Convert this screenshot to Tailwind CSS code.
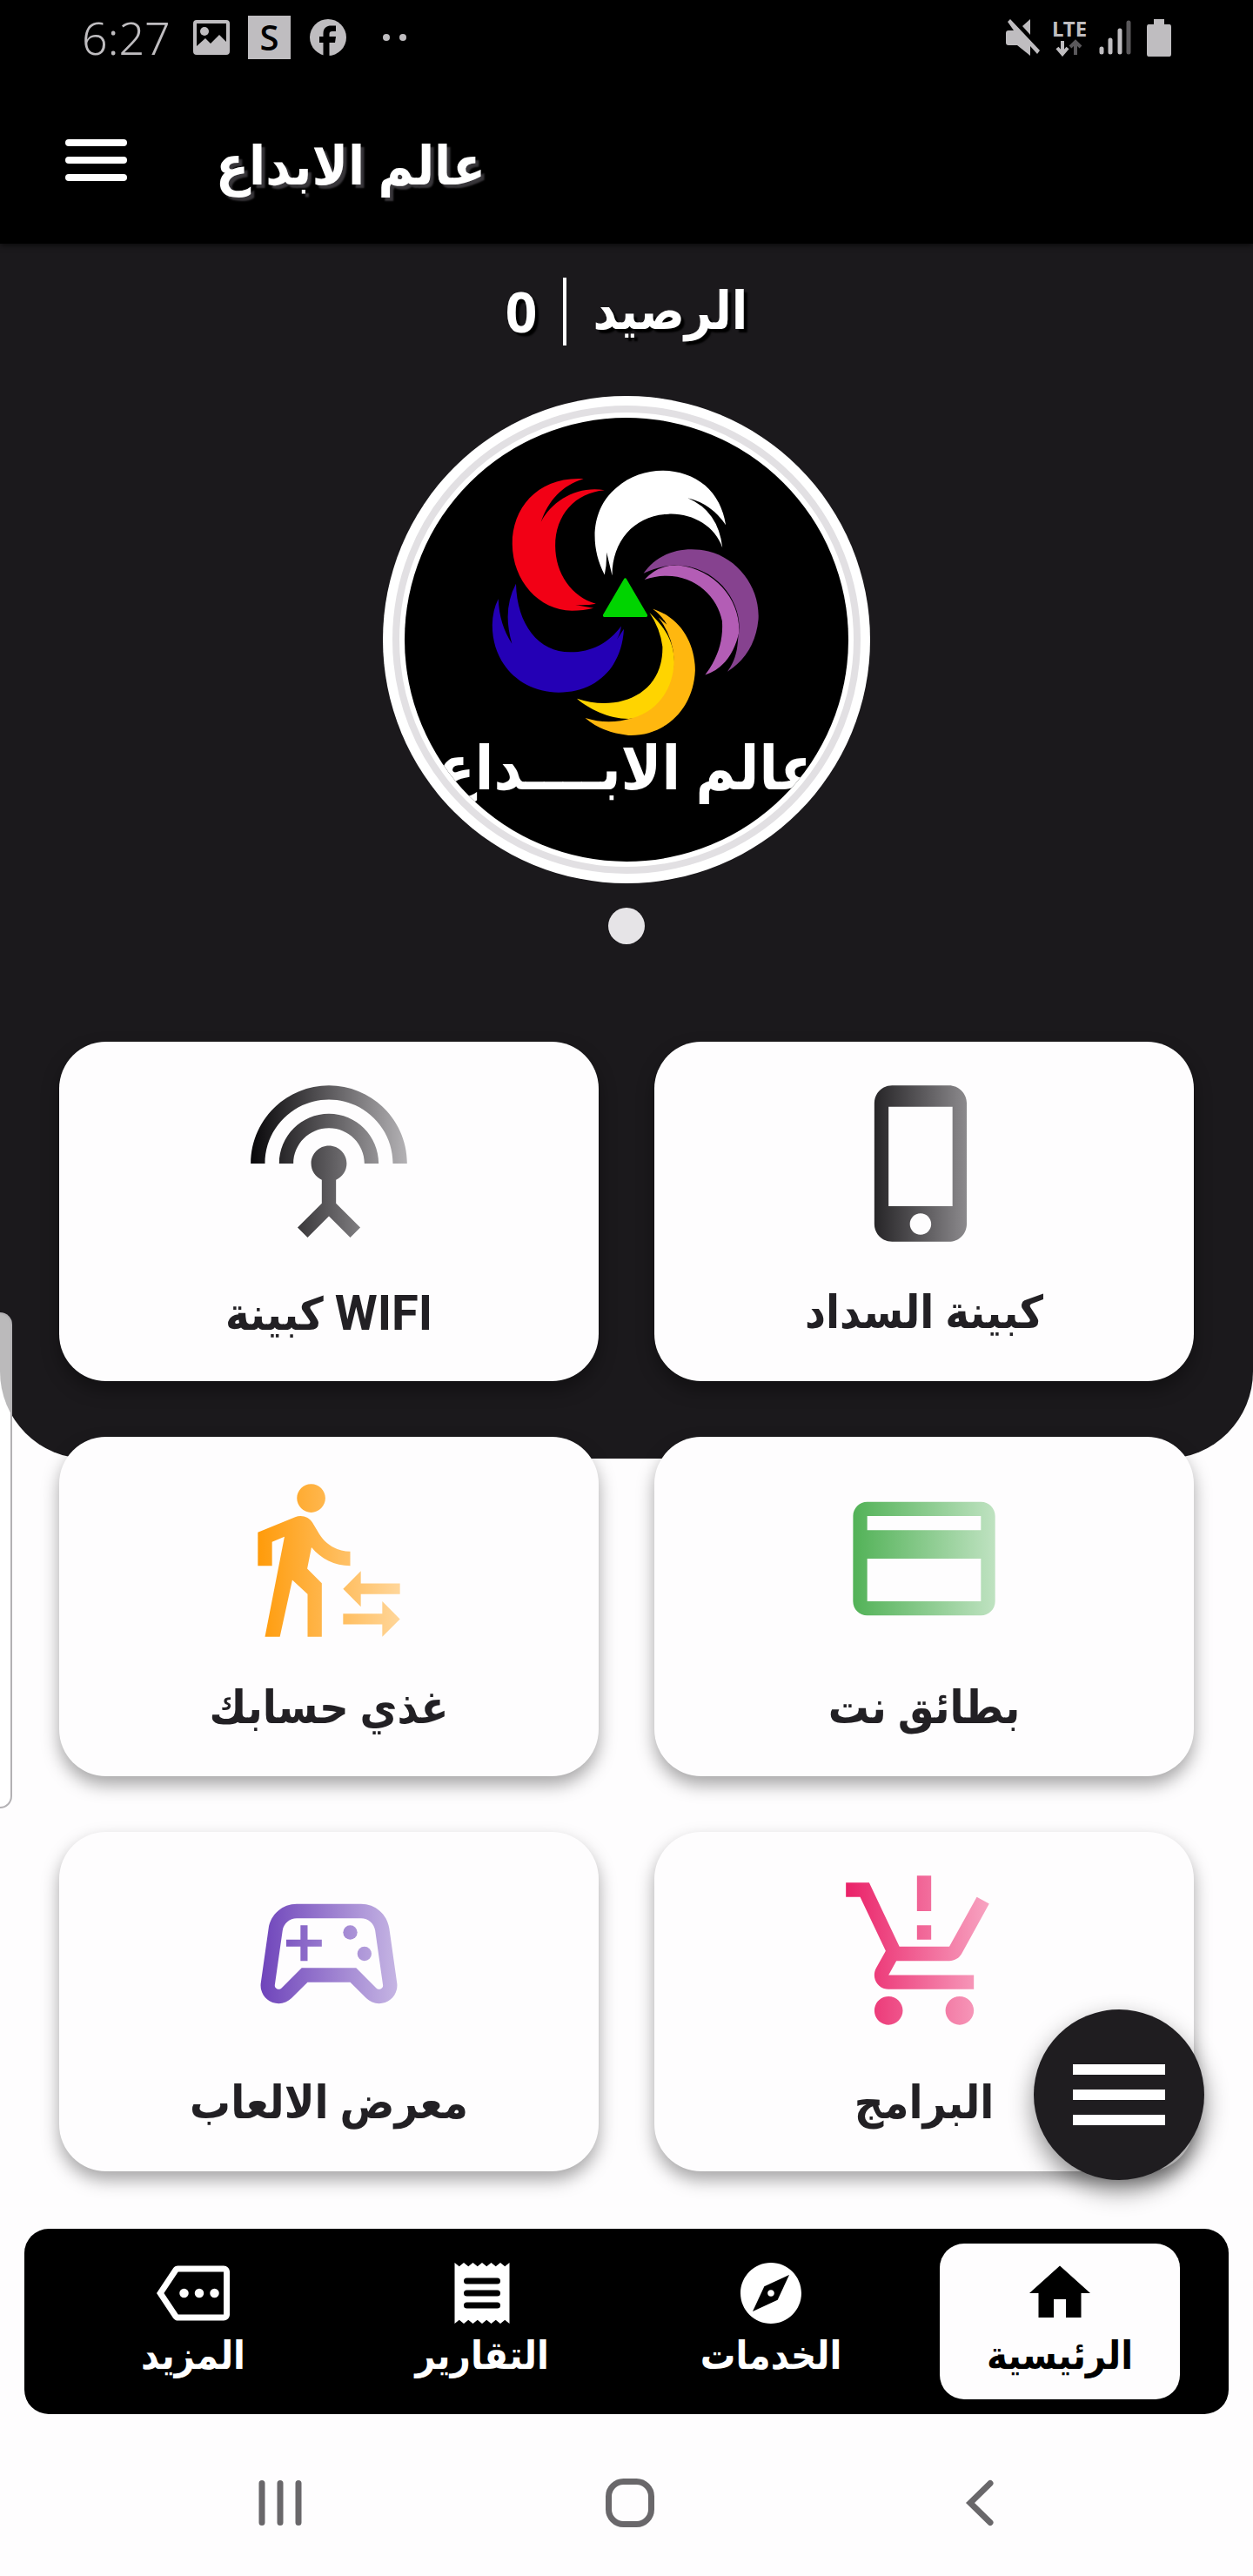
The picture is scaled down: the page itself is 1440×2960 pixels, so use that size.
<!DOCTYPE html>
<html lang="ar">
<head>
<meta charset="utf-8">
<meta name="viewport" content="width=device-width, initial-scale=1">
<title>عالم الابداع</title>
<script src="https://cdn.jsdelivr.net/npm/@tailwindcss/browser@4"></script>
</head>
<body class="bg-[#fefdfe] font-['Roboto','DejaVu_Sans_Condensed','DejaVu_Sans',sans-serif] font-bold text-[#222024]">
<div class="relative flex min-h-screen flex-col overflow-hidden">

  <header class="relative z-10 bg-black text-white shadow-[0_2px_6px_rgba(0,0,0,0.6)]">
    <!-- system status bar -->
    <div class="flex h-[88px] items-start justify-between pt-[14px] pr-[94px] pl-[94px] text-[#bfbdc0]">
      <div class="flex h-[58px] items-center">
        <span class="w-[128px] font-['Noto_Sans'] text-[52px] leading-[58px] font-light">6:27</span>
        <svg class="h-[40px] w-[42px]" viewBox="0 0 42 40" fill="currentColor"><path fill-rule="evenodd" d="M4 0H38Q42 0 42 4V36Q42 40 38 40H4Q0 40 0 36V4Q0 0 4 0ZM4 4V30L14 21L20 27L30 17L38 25V4Z"/><circle cx="13" cy="13" r="5"/></svg>
        <span class="ml-[21px] flex h-[50px] w-[49px] items-center justify-center bg-[#bfbdc0] font-['Open_Sans'] text-[40px] leading-none font-semibold text-black">S</span>
        <svg class="ml-[22px] h-[42px] w-[42px]" viewBox="0 0 42 42"><circle cx="21" cy="21" r="21" fill="currentColor"/><path d="M15.500 42V27H11V20H15.500V17C15.500 10 19 7.500 25 7.500H30V14H26C23.500 14 22.500 15 22.500 17V20H30L29 27H22.500V42Z" fill="#000"/></svg>
        <svg class="ml-[42px] h-[10px] w-[28px]" viewBox="0 0 28 10" fill="currentColor"><circle cx="4" cy="5" r="4"/><circle cx="23" cy="5" r="4"/></svg>
      </div>
      <div class="flex h-[58px] items-center">
        <svg class="h-[42px] w-[40px]" viewBox="0 0 40 42" fill="currentColor"><path d="M3 13H9L2 3L5 0L39 36L36 40L28 31V42L13 30H3Q0 30 0 27V16Q0 13 3 13ZM28 0V18L19 8Z"/></svg>
        <div class="ml-[11px] flex w-[44px] flex-col items-center">
          <span class="font-['Noto_Sans'] text-[24px] leading-[24px] font-bold">LTE</span>
          <svg class="h-[20px] w-[32px]" viewBox="0 0 32 20" fill="none" stroke-width="4"><path d="M8 2V17M2 10L8 17L14 10" stroke="#bfbdc0"/><path d="M23 18V3M17 9L23 3L29 9" stroke="#5a585b"/></svg>
        </div>
        <svg class="ml-[12px] h-[40px] w-[37px]" viewBox="0 0 37 40" stroke="currentColor" stroke-width="5" stroke-linecap="round"><path d="M3 33V37M13 23V37M24 12V37"/><path d="M34 3V37" stroke="#5a585b"/></svg>
        <svg class="ml-[18px] h-[43px] w-[28px]" viewBox="0 0 28 43" fill="currentColor"><path d="M8 0H20V6H26Q28 6 28 9V40Q28 43 26 43H2Q0 43 0 40V9Q0 6 2 6H8Z"/></svg>
      </div>
    </div>
    <!-- app bar -->
    <div class="flex h-[192px] items-center gap-[102px] pl-[75px]">
      <button type="button" aria-label="القائمة" class="flex h-[48px] w-[71px] flex-col justify-between">
        <span class="h-[8px] w-full rounded-full bg-white"></span>
        <span class="h-[8px] w-full rounded-full bg-white"></span>
        <span class="h-[8px] w-full rounded-full bg-white"></span>
      </button>
      <h1 dir="rtl" class="pt-[14px] text-[62px] leading-[80px] [text-shadow:4px_4px_2px_#38363a]">عالم الابداع</h1>
    </div>
  </header>

  <main>
    <section class="flex flex-col items-center rounded-b-[100px] bg-[#1b191c] pb-[591px]">
      <div dir="rtl" class="mt-[32px] flex h-[92px] items-center gap-[30px] text-[60px] leading-[80px] text-white [text-shadow:4px_4px_2px_#000]">
        <span>الرصيد</span>
        <span class="h-[78px] w-[4px] bg-white"></span>
        <span class="font-['Open_Sans'] text-[64px] font-bold">0</span>
      </div>
      <div class="mt-[51px] h-[560px] w-[560px] rounded-full">
        <svg class="h-full w-full" viewBox="440 455 560 560" role="img" aria-label="شعار عالم الابداع">
          <defs><clipPath id="disc"><circle cx="720" cy="735" r="255"/></clipPath></defs>
          <circle cx="720" cy="735" r="280" fill="#fff"/>
          <circle cx="720" cy="735" r="265" fill="none" stroke="#e2e0e3" stroke-width="8"/>
          <circle cx="720" cy="735" r="255" fill="#000"/>
          <g transform="translate(420 440) scale(.3827 .4209)">
            <path fill="#f20015" d="M655 262C520 255 440 340 441 440C442 540 520 620 620 622Q655 622 685 615L630 606Q665 608 692 603C620 585 570 520 570 445C570 360 630 300 718 293C640 280 560 320 527 380C550 320 590 280 655 262Z"/>
            <path fill="#fff" d="M718 524C670 440 680 340 755 285C830 225 950 225 1020 280Q1070 320 1082 388Q1040 330 968 314Q1060 350 1072 450C1050 390 980 355 910 358C810 360 740 430 741 526L724 462Q725 495 718 524Z"/>
            <path fill="#86428f" d="M835 520C880 460 960 445 1030 460C1120 480 1185 560 1180 645Q1170 740 1087 788C1125 740 1115 700 1122 680C1130 600 1060 500 930 497Q880 500 835 520Z"/>
            <path fill="#b35db5" d="M838 537Q880 495 940 498C1050 510 1125 590 1122 680C1110 730 1080 780 1020 797C1060 750 1075 700 1071 650C1055 570 960 500 838 537Z"/>
            <path fill="#2400b5" d="M399 590Q402 660 440 712Q410 620 452 548C455 660 520 735 615 735C680 735 730 710 768 664Q765 685 755 700L776 672C770 780 690 845 580 845C470 845 380 770 381 660Q382 620 399 590Z"/>
            <path fill="#ffd400" d="M853 627C900 670 925 700 928 765C925 840 880 915 790 917C730 917 670 890 635 862C760 900 895 850 892 720Q885 670 853 627Z"/>
            <path fill="#ffb70f" d="M863 617C945 640 990 710 990 785C985 890 900 965 790 962Q710 955 660 915Q730 935 802 915C880 895 930 830 926 750Q922 690 880 640L905 660Q890 635 863 617Z"/>
            <path fill="#00d400" stroke="#00d400" stroke-width="8" stroke-linejoin="round" d="M780 537L843 635H717Z"/>
          </g>
          <g clip-path="url(#disc)"><text x="721" y="907" text-anchor="middle" direction="rtl" fill="#fff" class="text-[70px]">عالم الابــــداع</text></g>
        </svg>
      </div>
      <span class="mt-[28px] h-[42px] w-[42px] rounded-full bg-[#e6e4e7]"></span>
    </section>

    <div class="relative -mt-[479px]">
      <svg class="absolute h-0 w-0" aria-hidden="true">
        <defs>
          <linearGradient id="g-black" gradientUnits="userSpaceOnUse" x1="1" y1="0" x2="23" y2="0"><stop stop-color="#080709"/><stop offset=".5" stop-color="#5c5a5d"/><stop offset="1" stop-color="#b4b2b5"/></linearGradient>
          <linearGradient id="g-orange" gradientUnits="userSpaceOnUse" x1="2" y1="0" x2="22" y2="0"><stop stop-color="#ff9b0a"/><stop offset="1" stop-color="#ffd69a"/></linearGradient>
          <linearGradient id="g-green" gradientUnits="userSpaceOnUse" x1="2" y1="0" x2="22" y2="0"><stop stop-color="#52b257"/><stop offset="1" stop-color="#bfe2c1"/></linearGradient>
          <linearGradient id="g-purple" gradientUnits="userSpaceOnUse" x1="2" y1="0" x2="22" y2="0"><stop stop-color="#6d42ba"/><stop offset="1" stop-color="#c7b7e4"/></linearGradient>
          <linearGradient id="g-pink" gradientUnits="userSpaceOnUse" x1="1" y1="0" x2="22" y2="0"><stop stop-color="#ea2168"/><stop offset="1" stop-color="#f8a9c5"/></linearGradient>
        </defs>
      </svg>
      <div dir="rtl" class="grid grid-cols-2 gap-[64px] px-[68px] text-[52px] leading-[64px]">
        <a href="#pay" class="flex h-[390px] flex-col items-center rounded-[54px] bg-[#fefdfe] pt-[42px] shadow-[0_10px_20px_rgba(0,0,0,0.35)]">
          <svg class="h-[196px] w-[196px]" viewBox="0 0 24 24" fill="url(#g-black)"><path d="M15.500 1h-8C6.120 1 5 2.120 5 3.500v17C5 21.880 6.120 23 7.500 23h8c1.380 0 2.500-1.120 2.500-2.500v-17C18 2.120 16.880 1 15.500 1zm-4 21c-.830 0-1.500-.670-1.500-1.500s.670-1.500 1.500-1.500 1.500.670 1.500 1.500-.670 1.500-1.500 1.500zm4.500-4H7V4h9v14z"/></svg>
          <span class="mt-[42px]">كبينة السداد</span>
        </a>
        <a href="#wifi" class="flex h-[390px] flex-col items-center rounded-[54px] bg-[#fefdfe] pt-[42px] shadow-[0_10px_20px_rgba(0,0,0,0.35)]">
          <svg class="h-[196px] w-[196px]" viewBox="0 0 24 24" fill="url(#g-black)"><path d="M12 5c-3.870 0-7 3.130-7 7h2c0-2.760 2.240-5 5-5s5 2.240 5 5h2c0-3.870-3.130-7-7-7zm1 9.290c.880-.390 1.500-1.260 1.500-2.290 0-1.380-1.120-2.500-2.500-2.500S9.500 10.620 9.500 12c0 1.020.620 1.900 1.500 2.290v3.300L7.590 21 9 22.410l3-3 3 3L16.410 21 13 17.590v-3.300zM12 1C5.930 1 1 5.930 1 12h2c0-4.970 4.030-9 9-9s9 4.030 9 9h2c0-6.070-4.930-11-11-11z"/></svg>
          <span class="mt-[42px]"><span class="text-[56px]">WIFI</span> كبينة</span>
        </a>
        <a href="#cards" class="flex h-[390px] flex-col items-center rounded-[54px] bg-[#fefdfe] pt-[42px] shadow-[0_10px_20px_rgba(0,0,0,0.35)]">
          <svg class="h-[196px] w-[196px]" viewBox="0 0 24 24" fill="url(#g-green)"><path d="M20 4H4c-1.110 0-1.990.890-1.990 2L2 18c0 1.110.890 2 2 2h16c1.110 0 2-.890 2-2V6c0-1.110-.890-2-2-2zm0 14H4v-6h16v6zm0-10H4V6h16v2z"/></svg>
          <span class="mt-[42px]">بطائق نت</span>
        </a>
        <a href="#topup" class="flex h-[390px] flex-col items-center rounded-[54px] bg-[#fefdfe] pt-[42px] shadow-[0_10px_20px_rgba(0,0,0,0.35)]">
          <svg class="h-[196px] w-[196px]" viewBox="0 0 24 24" fill="url(#g-orange)"><path d="M16.490 15.500v-1.750L14 16.250l2.490 2.500V17H22v-1.500h-5.510zm3.020 4.250H14v1.500h5.510V23L22 20.500 19.510 18v1.750zM9.500 5.500c1.100 0 2-.900 2-2s-.900-2-2-2-2 .900-2 2 .900 2 2 2zM5.750 8.900L3 23h2.100l1.750-8L9 17v6h2v-7.550L8.950 13.400l.6-3C10.850 12 12.800 13 15 13v-2c-1.850 0-3.450-1-4.350-2.450l-.950-1.600C9.350 6.350 8.700 6 8 6c-.250 0-.500.050-.750.150L2 8.300V13h2V9.650l1.750-.750"/></svg>
          <span class="mt-[42px]">غذي حسابك</span>
        </a>
        <a href="#apps" class="flex h-[390px] flex-col items-center rounded-[54px] bg-[#fefdfe] pt-[42px] shadow-[0_10px_20px_rgba(0,0,0,0.35)]">
          <svg class="h-[196px] w-[196px]" viewBox="0 0 24 24" fill="url(#g-pink)"><path d="M13 10h-2V8h2v2zm0-4h-2V1h2v5zM7 18c-1.100 0-1.990.900-1.990 2S5.900 22 7 22s2-.900 2-2-.900-2-2-2zm10 0c-1.100 0-1.990.900-1.990 2s.890 2 1.990 2 2-.900 2-2-.900-2-2-2zm-8.900-5h7.450c.750 0 1.410-.410 1.750-1.030l3.860-7.010L19.420 4l-3.870 7H8.530L4.270 2H1v2h2l3.600 7.590-1.350 2.440C4.520 15.370 5.480 17 7 17h12v-2H7l1.100-2z"/></svg>
          <span class="mt-[42px]">البرامج</span>
        </a>
        <a href="#games" class="flex h-[390px] flex-col items-center rounded-[54px] bg-[#fefdfe] pt-[42px] shadow-[0_10px_20px_rgba(0,0,0,0.35)]">
          <svg class="h-[196px] w-[196px]" viewBox="0 0 24 24" fill="url(#g-purple)"><path d="M21.580,16.090l-1.090-7.660C20.210,6.460,18.520,5,16.530,5H7.470C5.480,5,3.790,6.460,3.510,8.430l-1.090,7.660C2.200,17.630,3.390,19,4.940,19h0c0.680,0,1.320-0.270,1.800-0.750L9,16h6l2.250,2.250c0.480,0.480,1.130,0.750,1.800,0.750h0C20.610,19,21.800,17.630,21.580,16.090z M19.480,16.810C19.400,16.900,19.270,17,19.060,17c-0.150,0-0.290-0.060-0.390-0.160L15.830,14H8.170l-2.840,2.840C5.230,16.940,5.090,17,4.940,17c-0.210,0-0.340-0.100-0.420-0.190c-0.080-0.090-0.160-0.230-0.130-0.440l1.090-7.660C5.630,7.740,6.480,7,7.470,7h9.060c0.990,0,1.840,0.740,1.980,1.720l1.090,7.660C19.630,16.580,19.550,16.720,19.480,16.810z"/><path d="M9 8H8V10H6V11H8V13H9V11H11V10H9Z"/><circle cx="17" cy="12" r="1"/><circle cx="15" cy="9" r="1"/></svg>
          <span class="mt-[42px]">معرض الالعاب</span>
        </a>
      </div>
      <!-- floating menu button -->
      <button type="button" aria-label="قائمة سريعة" class="absolute right-[56px] -bottom-[10px] flex h-[196px] w-[196px] flex-col items-center justify-center gap-[17px] rounded-full bg-[#1f1d20] shadow-[0_12px_28px_rgba(0,0,0,0.45)]">
        <span class="h-[12px] w-[106px] bg-white"></span>
        <span class="h-[12px] w-[106px] bg-white"></span>
        <span class="h-[12px] w-[106px] bg-white"></span>
      </button>
    </div>
  </main>

  <nav dir="rtl" class="mx-[28px] mt-[66px] grid grid-cols-4 rounded-[28px] bg-black px-[28px] py-[17px] text-[45px] leading-[60px] text-white">
    <a href="#home" class="mx-[28px] flex h-[179px] flex-col items-center rounded-[28px] bg-[#fefdfe] pt-[15px] text-black">
      <svg class="h-[84px] w-[84px]" viewBox="0 0 24 24" fill="currentColor"><path d="M10 20v-6h4v6h5v-8h3L12 3 2 12h3v8z"/></svg>
      <span>الرئيسية</span>
    </a>
    <a href="#services" class="mx-[28px] flex h-[179px] flex-col items-center pt-[15px]">
      <svg class="h-[84px] w-[84px]" viewBox="0 0 24 24" fill="currentColor"><path d="M12 10.900c-.610 0-1.100.490-1.100 1.100s.490 1.100 1.100 1.100c.610 0 1.100-.490 1.100-1.100s-.490-1.100-1.100-1.100zM12 2C6.480 2 2 6.480 2 12s4.480 10 10 10 10-4.480 10-10S17.520 2 12 2zm2.190 12.190L6 18l3.810-8.190L18 6l-3.810 8.190z"/></svg>
      <span>الخدمات</span>
    </a>
    <a href="#reports" class="mx-[28px] flex h-[179px] flex-col items-center pt-[15px]">
      <svg class="h-[84px] w-[84px]" viewBox="0 0 24 24" fill="currentColor"><path d="M3 2l1.500 1.200L6 2l1.500 1.200L9 2l1.500 1.200L12 2l1.500 1.200L15 2l1.500 1.200L18 2l1.500 1.200L21 2v20l-1.500-1.200L18 22l-1.500-1.200L15 22l-1.500-1.200L12 22l-1.500-1.200L9 22l-1.500-1.200L6 22l-1.500-1.200L3 22z"/><path d="M7 8H17M7 12H17M7 16H17" stroke="#000" stroke-width="2" stroke-linecap="round"/></svg>
      <span>التقارير</span>
    </a>
    <a href="#more" class="mx-[28px] flex h-[179px] flex-col items-center pt-[15px]">
      <svg class="h-[84px] w-[84px]" viewBox="0 0 24 24" fill="currentColor"><path d="M22 3H7c-.690 0-1.230.350-1.590.880L0 12l5.410 8.110c.360.530.970.890 1.660.890H22c1.100 0 2-.900 2-2V5c0-1.100-.900-2-2-2zm0 16H7.070L2.400 12l4.660-7H22v14z"/><circle cx="9" cy="12" r="1.500"/><circle cx="14" cy="12" r="1.500"/><circle cx="19" cy="12" r="1.500"/></svg>
      <span>المزيد</span>
    </a>
  </nav>

  <!-- system navigation -->
  <div class="grid h-[186px] grid-cols-3 items-center justify-items-center pt-[18px] pr-[113px] pl-[121px] text-[#69676a]">
    <button type="button" aria-label="التطبيقات الأخيرة"><svg class="h-[56px] w-[56px]" viewBox="0 0 56 56" fill="none" stroke="currentColor" stroke-width="7" stroke-linecap="round"><path d="M7 5.500V50.500M28 5.500V50.500M49 5.500V50.500"/></svg></button>
    <button type="button" aria-label="الشاشة الرئيسية"><svg class="h-[56px] w-[56px]" viewBox="0 0 56 56" fill="none" stroke="currentColor" stroke-width="7"><rect x="3.500" y="3.500" width="49" height="49" rx="17"/></svg></button>
    <button type="button" aria-label="رجوع"><svg class="h-[56px] w-[56px]" viewBox="0 0 56 56" fill="none" stroke="currentColor" stroke-width="7" stroke-linecap="round"><path d="M40 5.500L17 28L40 50.500"/></svg></button>
  </div>

  <!-- edge panel handle -->
  <span class="absolute top-[1508px] left-0 z-20 h-[570px] w-[14px] rounded-r-[14px] border-2 border-l-0 border-[#b3b1b4] bg-white/70"></span>
</div>
</body>
</html>
